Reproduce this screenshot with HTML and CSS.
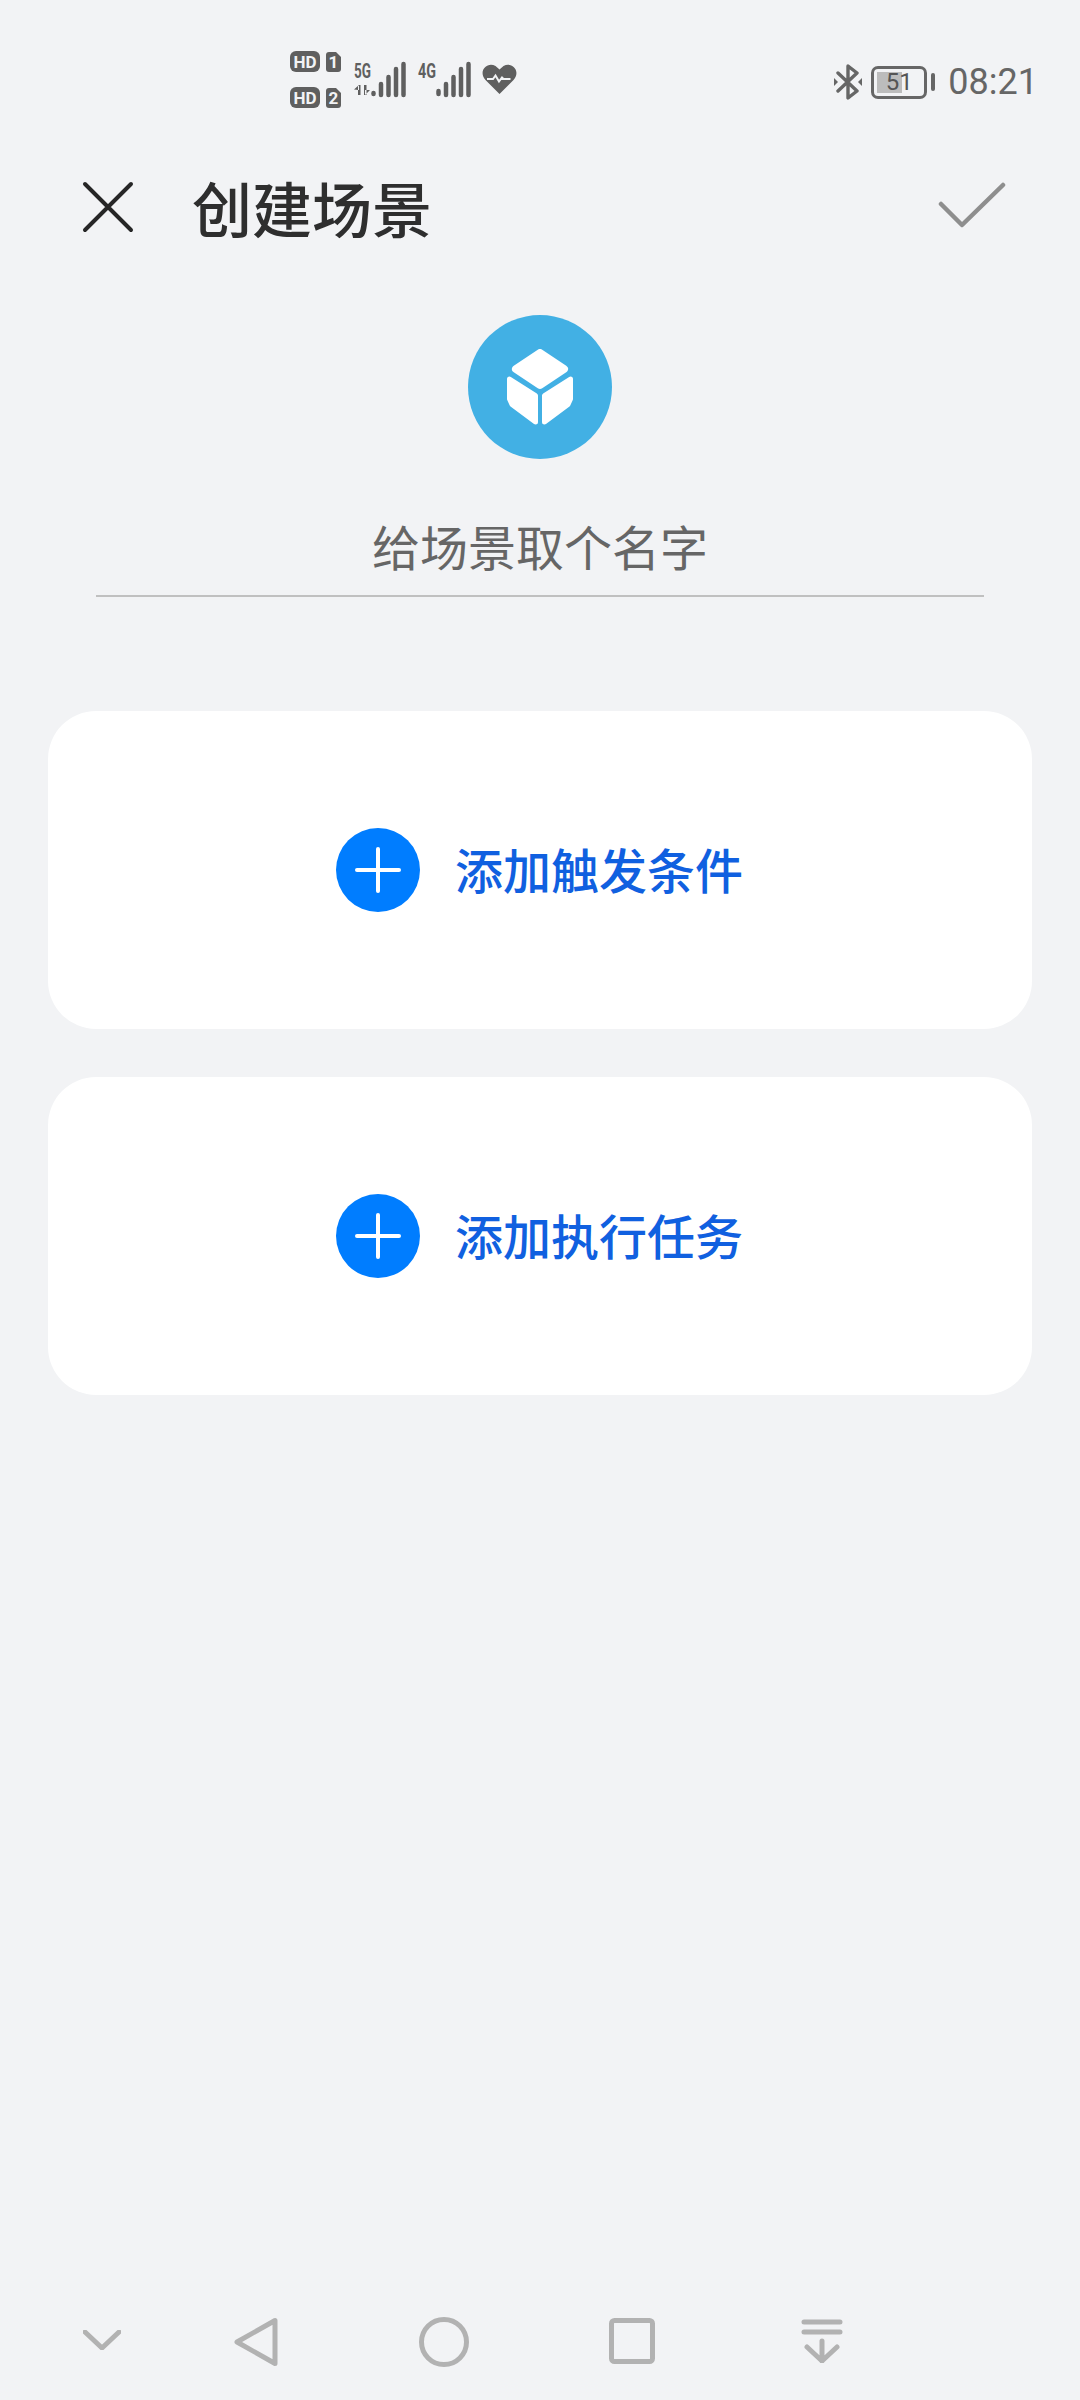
FILE: index.html
```html
<!DOCTYPE html>
<html lang="zh-CN">
<head>
    <meta charset="UTF-8">
    <meta name="viewport" content="width=device-width, initial-scale=1.0">
    <title>创建场景</title>
    <link rel="stylesheet" href="styles.css">
</head>
<body>
    <div class="page">
        <div class="status-bar">
            <svg class="status-left" width="230" height="64" viewBox="0 0 230 64">
                <!-- sim cards -->
                <rect x="0" y="0" width="30" height="21" rx="6" fill="#5f5f5f"/>
                <text class="hd" x="15" y="16.500" text-anchor="middle">HD</text>
                <path d="M39 1h7l5 5v12a3 3 0 0 1-3 3h-9a3 3 0 0 1-3-3V4a3 3 0 0 1 3-3z" fill="#5f5f5f"/>
                <text class="hd" x="43.500" y="16.500" text-anchor="middle">1</text>
                <rect x="0" y="36" width="30" height="21" rx="6" fill="#5f5f5f"/>
                <text class="hd" x="15" y="52.500" text-anchor="middle">HD</text>
                <path d="M39 37h7l5 5v12a3 3 0 0 1-3 3h-9a3 3 0 0 1-3-3V40a3 3 0 0 1 3-3z" fill="#5f5f5f"/>
                <text class="hd" x="43.500" y="52.500" text-anchor="middle">2</text>
                <!-- 5G signal -->
                <text class="net" x="64" y="27" textLength="17" lengthAdjust="spacingAndGlyphs">5G</text>
                <path d="M68 34v10h2.500V34zM64 38.500l5-4.500v5zM74 34v10h2.500V34zM80 39l-5 5v-5z" fill="#5f5f5f"/>
                <g stroke="#5f5f5f" stroke-width="4.500" stroke-linecap="round">
                    <path d="M83.500 42v1M91 33v11M98.500 26v18M106 18v26M113.500 13v31"/>
                </g>
                <!-- 4G signal -->
                <text class="net" x="128" y="27" textLength="18" lengthAdjust="spacingAndGlyphs">4G</text>
                <g stroke="#5f5f5f" stroke-width="4.500" stroke-linecap="round">
                    <path d="M148.500 40v3M156 33v11M163.500 26v18M171 18v26M178.500 13v31"/>
                </g>
                <!-- heart -->
                <path d="M209.500 43l-14-14c-8-9 2-19 10-14l4 3.500 4-3.500c8-5 18 5 10 14z" fill="#5f5f5f"/>
                <path d="M197 28h6l2.500-3.500 3.500 6 3-4 1.500 1.500h7" stroke="#f2f3f5" stroke-width="2" fill="none"/>
            </svg>
            <div class="status-right">
                <svg width="28" height="36" viewBox="0 0 28 36">
                    <path d="M4 9l19 18-9 7V2l9 7L4 27" stroke="#666" stroke-width="3.400" fill="none" stroke-linecap="round" stroke-linejoin="round"/>
                    <path d="M0 14v8l4-4zM28 14v8l-4-4z" fill="#666"/>
                </svg>
                <div class="battery">
                    <div class="battery-body">
                        <div class="battery-fill"></div>
                        <span class="battery-text">51</span>
                    </div>
                    <div class="battery-nub"></div>
                </div>
                <span class="time">08:21</span>
            </div>
        </div>

        <header class="title-bar">
            <svg class="close-icon" width="52" height="52" viewBox="0 0 52 52">
                <path d="M3 3l46 46M49 3L3 49" stroke="#262626" stroke-width="4" stroke-linecap="round" fill="none"/>
            </svg>
            <h1 class="title">创建场景</h1>
            <svg class="check-icon" width="68" height="46" viewBox="0 0 68 46">
                <path d="M3 22l21 21L65 3" stroke="#8e8e8e" stroke-width="4.500" stroke-linecap="round" stroke-linejoin="round" fill="none"/>
            </svg>
        </header>

        <div class="scene-icon">
            <svg width="68" height="76" viewBox="0 0 68 76">
                <path d="M34 4L58 20 34 36 10 20z" class="cube-face cube-top"/>
                <path d="M3.500 30L29.500 46.500V73L6 55.500 3.500 50z" class="cube-face"/>
                <path d="M64.500 30L38.500 46.500V73L62 55.500 64.500 50z" class="cube-face"/>
            </svg>
        </div>

        <div class="name-field">给场景取个名字</div>

        <section class="cards">
            <div class="add-card">
                <div class="plus-btn"><span class="plus-h"></span><span class="plus-v"></span></div>
                <span class="add-label">添加触发条件</span>
            </div>
            <div class="add-card">
                <div class="plus-btn"><span class="plus-h"></span><span class="plus-v"></span></div>
                <span class="add-label">添加执行任务</span>
            </div>
        </section>

        <nav class="nav-bar">
            <svg class="nav-hide" width="38" height="20" viewBox="0 0 38 20">
                <path d="M2 2l17 16L36 2" class="nav-stroke"/>
            </svg>
            <svg class="nav-back" width="44" height="50" viewBox="0 0 44 50">
                <path d="M41 3.500v43L3 25z" class="nav-stroke"/>
            </svg>
            <svg class="nav-home" width="50" height="50" viewBox="0 0 50 50">
                <circle cx="25" cy="25" r="22.500" class="nav-stroke"/>
            </svg>
            <svg class="nav-recent" width="46" height="46" viewBox="0 0 46 46">
                <rect x="2.500" y="2.500" width="41" height="41" rx="3" class="nav-stroke"/>
            </svg>
            <svg class="nav-down" width="42" height="44" viewBox="0 0 42 44">
                <path d="M3 3h36M3 13h36M21 22v20M6 28l15 14 15-14" class="nav-stroke"/>
            </svg>
        </nav>
    </div>
</body>
</html>
```

FILE: styles.css
```css
* {
    box-sizing: border-box;
}

body {
    margin: 0;
    background-color: #f2f3f5;
    font-family: "Noto Sans CJK SC", "Noto Sans", sans-serif;
}

.page {
    width: 1080px;
    height: 2400px;
    display: flex;
    flex-direction: column;
    overflow: hidden;
}

/* status bar */
.status-bar {
    height: 148px;
    padding: 51px 42px 0 290px;
    display: flex;
    justify-content: space-between;
    align-items: flex-start;
}

.status-right {
    display: flex;
    align-items: center;
    margin-top: 10px;
    height: 42px;
}

.hd {
    font-family: "Roboto", sans-serif;
    font-size: 17px;
    font-weight: 700;
    fill: #f2f3f5;
}

.net {
    font-family: "Roboto", sans-serif;
    font-size: 20px;
    font-weight: 700;
    fill: #5f5f5f;
}

.battery {
    display: flex;
    align-items: center;
    margin-left: 9px;
}

.battery-body {
    position: relative;
    width: 56px;
    height: 33px;
    border: 3px solid #666;
    border-radius: 7px;
}

.battery-fill {
    width: 25px;
    height: 21px;
    margin: 3px 0 0 3px;
    background-color: #bcbcbc;
}

.battery-text {
    position: absolute;
    top: 0;
    left: 0;
    right: 0;
    text-align: center;
    font-family: "Roboto", sans-serif;
    font-size: 24px;
    line-height: 27px;
    color: #555;
}

.battery-nub {
    width: 4px;
    height: 18px;
    margin-left: 4px;
    border-radius: 2px;
    background-color: #666;
}

.time {
    margin-left: 13px;
    font-family: "Roboto", sans-serif;
    font-size: 36px;
    color: #666;
}

/* title */
.title-bar {
    height: 120px;
    padding: 0 74px 0 82px;
    display: flex;
    align-items: center;
}

.close-icon {
    margin-bottom: 2px;
}

.check-icon {
    margin-bottom: 6px;
}

.title {
    margin: 0 0 2px 58px;
    flex: 1;
    font-size: 60px;
    font-weight: 500;
    line-height: 1;
    color: #2e2e2e;
}

.scene-icon {
    width: 144px;
    height: 144px;
    margin: 47px auto 0;
    border-radius: 50%;
    background-color: #42b0e4;
    display: flex;
    align-items: center;
    justify-content: center;
}

.cube-face {
    fill: #fff;
    stroke: #fff;
    stroke-width: 5;
    stroke-linejoin: round;
}

.cube-top {
    stroke-width: 8;
}

.name-field {
    height: 138px;
    margin: 0 96px;
    padding-top: 54px;
    border-bottom: 2px solid #c0c0c0;
    text-align: center;
    font-size: 48px;
    line-height: 64px;
    color: #666;
}

/* cards */
.cards {
    margin: 114px 48px 0;
    display: flex;
    flex-direction: column;
    gap: 48px;
}

.add-card {
    height: 318px;
    padding-left: 288px;
    border-radius: 48px;
    background-color: #fff;
    display: flex;
    align-items: center;
    gap: 35px;
}

.plus-btn {
    position: relative;
    width: 84px;
    height: 84px;
    border-radius: 50%;
    background-color: #007dff;
}

.plus-h,
.plus-v {
    position: absolute;
    background-color: #fff;
    border-radius: 3px;
}

.plus-h {
    left: 19px;
    top: 40px;
    width: 46px;
    height: 4px;
}

.plus-v {
    left: 40px;
    top: 19px;
    width: 4px;
    height: 46px;
}

.add-label {
    margin-bottom: 5px;
    font-size: 48px;
    font-weight: 500;
    line-height: 1;
    color: #1060e0;
}

/* bottom nav */
.nav-bar {
    margin-top: auto;
    height: 118px;
    padding: 0 0 0 83px;
    display: flex;
    align-items: flex-start;
}

.nav-stroke {
    fill: none;
    stroke: #b2b2b2;
    stroke-width: 5;
    stroke-linecap: round;
    stroke-linejoin: round;
}

.nav-hide {
    margin-top: 48px;
}

.nav-back {
    margin: 35px 0 0 113px;
}

.nav-home {
    margin: 35px 0 0 141px;
}

.nav-recent {
    margin: 36px 0 0 140px;
}

.nav-down {
    margin: 37px 0 0 146px;
}
```
